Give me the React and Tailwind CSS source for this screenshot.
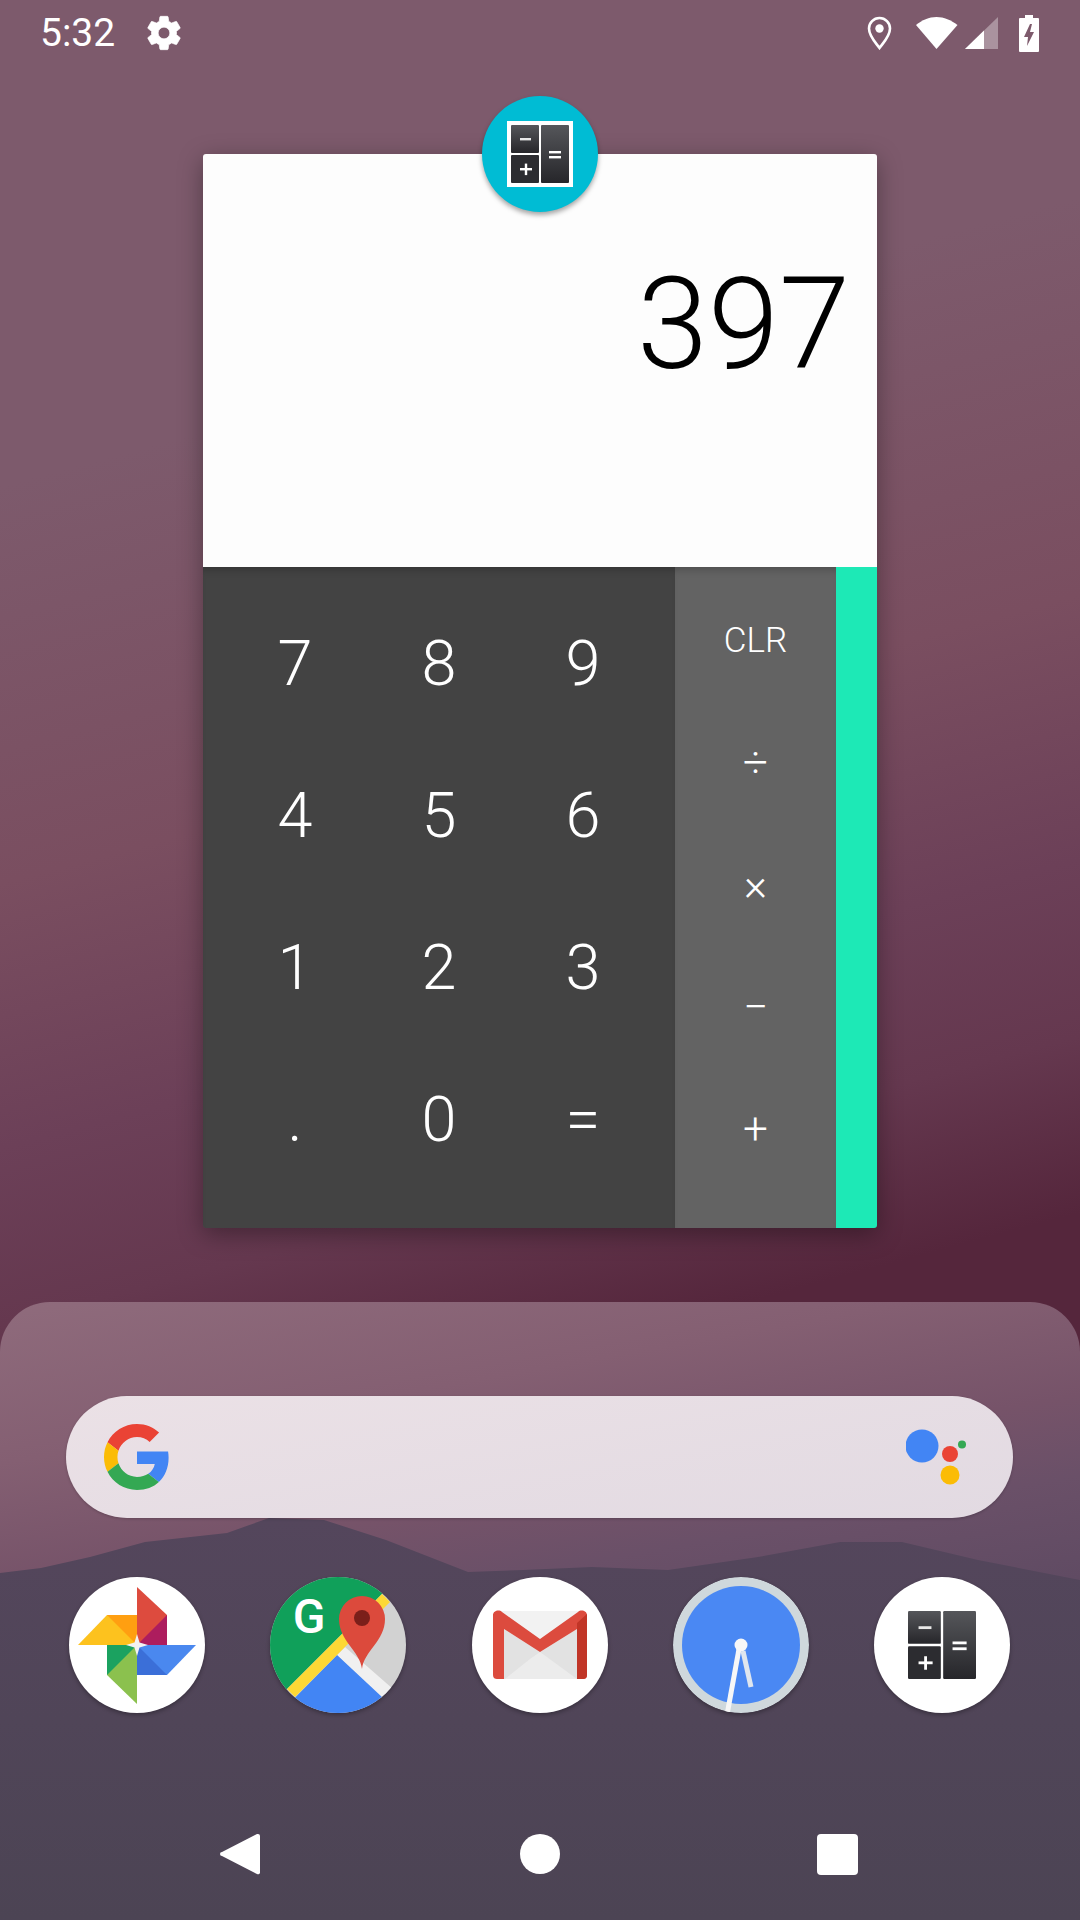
import React from 'react';

const font = { fontFamily: 'Roboto, sans-serif' };

const digits = ['7', '8', '9', '4', '5', '6', '1', '2', '3', '.', '0', '='];
const ops = ['CLR', '÷', '×', '−', '+'];

const CalcGlyph = ({ frame }) => (
  <svg viewBox={frame ? '0 0 66 66' : '4 4 58 58'} className="w-full h-full">
    <defs>
      <linearGradient id={frame ? 'keyA' : 'keyB'} x1="0" y1="0" x2="0" y2="1">
        <stop offset="0" stopColor="#55565a" />
        <stop offset="1" stopColor="#26262a" />
      </linearGradient>
    </defs>
    {frame && <rect width="66" height="66" fill="#fff" />}
    <rect x="4" y="4" width="28" height="28" rx="1" fill={`url(#${frame ? 'keyA' : 'keyB'})`} />
    <rect x="4" y="34" width="28" height="28" rx="1" fill="#2c2c30" />
    <rect x="34" y="4" width="28" height="58" rx="1" fill={`url(#${frame ? 'keyA' : 'keyB'})`} />
    <rect x="13" y="17" width="11" height="2.4" fill="#e8e8e8" />
    <rect x="13" y="47" width="12" height="2.4" fill="#fff" />
    <rect x="17.800" y="42.600" width="2.4" height="11.500" fill="#fff" />
    <rect x="42" y="30" width="12" height="2.4" fill="#fff" />
    <rect x="42" y="35" width="12" height="2.4" fill="#fff" />
  </svg>
);

const PhotosIcon = () => (
  <svg viewBox="0 0 136 136" className="w-full h-full">
    <circle cx="68" cy="68" r="68" fill="#fff" />
    <path d="M68 68V10l30 28v30z" fill="#dd4b3e" />
    <path d="M68 68l30-30v30z" fill="#ad1d5e" />
    <path d="M68 68H9l29-30h30z" fill="#fdc21e" />
    <path d="M68 68L38 38h30z" fill="#ff9f11" />
    <path d="M68 68v59L38 98V68z" fill="#8bc14e" />
    <path d="M68 68L38 98V68z" fill="#1ba260" />
    <path d="M68 68h59L98 98H68z" fill="#4a88ef" />
    <path d="M68 68l30 30H68z" fill="#3b6fd8" />
    <path d="M68 57l2.500 8.500 8.500 2.500-8.500 2.500L68 79l-2.500-8.500L57 68l8.500-2.500z" fill="#f2f2f2" />
  </svg>
);

const MapsIcon = () => (
  <svg viewBox="0 0 136 136" className="w-full h-full">
    <defs>
      <clipPath id="mapsClip"><circle cx="68" cy="68" r="68" /></clipPath>
    </defs>
    <g clipPath="url(#mapsClip)">
      <rect width="136" height="136" fill="#d2d2d2" />
      <path d="M0 0h129L0 129z" fill="#10a05a" />
      <path d="M75 70l48 42-11 12-45-46z" fill="#f0f0f0" />
      <path d="M67 78L10 136h122l-20-16z" fill="#4285f4" />
      <path d="M17 112l95-95 8 8-95 95z" fill="#fdd835" />
      <path d="M92 92c-2-18-23-28-23-50a23 23 0 0 1 46 0c0 22-21 32-23 50z" fill="#dc4a3c" />
      <circle cx="92" cy="41" r="8" fill="#7b1f1a" />
    </g>
    <text x="39" y="56" fontSize="48" fontWeight="500" fill="#fff" textAnchor="middle" style={font}>G</text>
  </svg>
);

const GmailIcon = () => (
  <svg viewBox="0 0 136 136" className="w-full h-full">
    <circle cx="68" cy="68" r="68" fill="#fff" />
    <rect x="25" y="34" width="86" height="68" fill="#f2f2f2" />
    <path d="M32 52l36 23 37-23v50H32z" fill="#e2e2e2" />
    <path d="M33 102l25-20 10-7 37 27z" fill="#ececec" />
    <path d="M21 38c0-4 6-6 9-3l38 27 38-27c3-3 9-1 9 3v60c0 3-2 4-4 4h-6V52L68 75 32 52v50h-7c-2 0-4-1-4-4z" fill="#dc4b3e" />
    <path d="M105 46l10-9v61c0 3-2 4-4 4h-6z" fill="#c13527" />
  </svg>
);

const ClockIcon = () => (
  <svg viewBox="0 0 136 136" className="w-full h-full">
    <defs>
      <clipPath id="clockClip"><circle cx="68" cy="68" r="68" /></clipPath>
    </defs>
    <g clipPath="url(#clockClip)">
      <circle cx="68" cy="68" r="68" fill="#cfd8dc" />
      <circle cx="68" cy="68" r="59" fill="#4a88f3" />
      <path d="M66 72L54 138" stroke="#f7f7f7" strokeWidth="5" />
      <path d="M70 74L78 110" stroke="#dfe6ee" strokeWidth="5" />
      <circle cx="68" cy="68" r="6.500" fill="#f7f7f7" />
    </g>
  </svg>
);

const dockIcons = [
  { id: 'photos', icon: <PhotosIcon /> },
  { id: 'maps', icon: <MapsIcon /> },
  { id: 'gmail', icon: <GmailIcon /> },
  { id: 'clock', icon: <ClockIcon /> },
  {
    id: 'calc',
    icon: (
      <div className="w-full h-full rounded-full bg-white flex items-center justify-center">
        <div className="w-[68px] h-[68px]"><CalcGlyph /></div>
      </div>
    ),
  },
];

const App = () => {
  return (
    <div
      className="relative w-[1080px] h-[1920px] overflow-hidden flex flex-col bg-[linear-gradient(165deg,#7d5a6c_0%,#7d5a6c_22%,#7a4e60_40%,#6c4058_52%,#65384f_60%,#55263c_68%,#55263c_100%)]"
      style={font}
    >
      {/* Status bar */}
      <div className="h-[66px] shrink-0 flex items-center pl-[40px] pr-[41px] text-white">
        <span className="text-[39px] leading-none font-normal">5:32</span>
        <svg viewBox="0 0 24 24" className="w-[40px] h-[40px] ml-[29px] fill-white stroke-white stroke-[0.4]">
          <path d="M19.43 12.98c.04-.32.07-.64.07-.98s-.03-.66-.07-.98l2.11-1.65c.19-.15.24-.42.12-.64l-2-3.46c-.12-.22-.39-.3-.61-.22l-2.49 1c-.52-.4-1.08-.73-1.69-.98l-.38-2.65C14.46 2.18 14.25 2 14 2h-4c-.25 0-.46.18-.49.42l-.38 2.65c-.61.25-1.17.59-1.69.98l-2.49-1c-.23-.09-.49 0-.61.22l-2 3.46c-.13.22-.07.49.12.64l2.11 1.65c-.04.32-.07.65-.07.98s.03.66.07.98l-2.11 1.65c-.19.15-.24.42-.12.64l2 3.46c.12.22.39.3.61.22l2.49-1c.52.4 1.08.73 1.69.98l.38 2.65c.03.24.24.42.49.42h4c.25 0 .46-.18.49-.42l.38-2.65c.61-.25 1.17-.59 1.69-.98l2.49 1c.23.09.49 0 .61-.22l2-3.46c.12-.22.07-.49-.12-.64l-2.11-1.65zM12 15.5c-1.93 0-3.5-1.57-3.5-3.5s1.57-3.5 3.5-3.5 3.5 1.57 3.5 3.5-1.57 3.5-3.5 3.5z" />
        </svg>
        <div className="ml-auto flex items-center">
          <svg viewBox="0 0 25 34" className="w-[25px] h-[34px]">
            <path d="M12.5 32C8 26 2 20 2 12.5a10.5 10.5 0 0 1 21 0C23 20 17 26 12.5 32z" fill="none" stroke="#fff" strokeWidth="2.6" />
            <circle cx="12.5" cy="12.5" r="4.2" fill="#fff" />
          </svg>
          <svg viewBox="0 0 42 34" className="w-[42px] h-[34px] ml-[24px]">
            <path d="M20.5 33L0 9C6 4 13 1 20.5 1S35 4 41.500 9z" fill="#fff" />
          </svg>
          <svg viewBox="0 0 33 34" className="w-[33px] h-[34px] ml-[7px]">
            <path d="M0 33L33 1v32z" fill="#fff" opacity="0.35" />
            <path d="M0 33L19 14.500V33z" fill="#fff" />
          </svg>
          <svg viewBox="0 0 20 37" className="w-[20px] h-[37px] ml-[21px]">
            <path d="M6 0h8v3h5a1 1 0 0 1 1 1v32a1 1 0 0 1-1 1H1a1 1 0 0 1-1-1V4a1 1 0 0 1 1-1h5z" fill="#fff" />
            <path d="M11 9L5 22h4l-1 9 7-14h-4l2-8z" fill="#7d5a6c" />
          </svg>
        </div>
      </div>

      {/* Recents card */}
      <div className="relative w-[674px] h-[1074px] shrink-0 ml-[203px] mt-[88px] rounded-[3px] shadow-[0_6px_24px_rgba(0,0,0,0.35)] flex flex-col">
        <div className="absolute left-[279px] top-[-58px] w-[116px] h-[116px] rounded-full bg-[#00bcd4] shadow-[0_3px_5px_rgba(0,0,0,0.35)] flex items-center justify-center z-10">
          <div className="w-[66px] h-[66px]"><CalcGlyph frame /></div>
        </div>

        <div className="h-[413px] shrink-0 bg-[#fdfdfd] rounded-t-[3px] flex justify-end pr-[27px] pt-[89px]">
          <span className="text-[128px] leading-[163px] font-light text-black">397</span>
        </div>

        <div className="flex-1 flex">
          <div className="w-[472px] bg-[#434343] rounded-bl-[3px] px-[20px] pt-[21px] shadow-[inset_0_8px_8px_-6px_rgba(0,0,0,0.25)]">
            <div className="grid grid-cols-3 auto-rows-[152px] text-white font-light text-[63px]">
              {digits.map((d) => (
                <div key={d} className="flex items-center justify-center">{d}</div>
              ))}
            </div>
          </div>
          <div className="w-[161px] bg-[#636363] pt-[13px] flex flex-col text-white font-light shadow-[inset_0_8px_8px_-6px_rgba(0,0,0,0.25)]">
            {ops.map((op) => (
              <div
                key={op}
                className={`h-[122px] flex items-center justify-center ${op === 'CLR' ? 'text-[35px]' : 'text-[44px]'}`}
              >
                {op}
              </div>
            ))}
          </div>
          <div className="w-[41px] bg-[#1de9b6] rounded-br-[3px]" />
        </div>
      </div>

      {/* Dock panel */}
      <div className="relative flex-1 mt-[74px] rounded-t-[50px] overflow-hidden bg-[linear-gradient(170deg,#8f6b7c_0%,#845f72_20%,#765369_35%,#6a5068_45%,#5e4a62_60%,#4e4556_100%)]">
        {/* mountains, coordinates relative to the panel */}
        <svg viewBox="0 0 1080 618" className="absolute left-0 top-0 w-[1080px] h-[618px]">
          <defs>
            <linearGradient id="ridge" x1="0" y1="0" x2="0" y2="1">
              <stop offset="0" stopColor="#54465c" />
              <stop offset="1" stopColor="#4c4454" />
            </linearGradient>
          </defs>
          <path
            d="M0 271L41 266 90 255 145 240 227 231 269 216 324 218 386 238 468 270 523 268 592 265 668 268 758 255 840 240 902 240 978 258 1080 278V618H0z"
            fill="url(#ridge)"
          />
        </svg>

        <div className="relative pt-[94px] pl-[66px] pr-[67px]">
          <div className="h-[122px] rounded-full bg-[linear-gradient(170deg,#ebe1e6,#e2dae2)] shadow-[0_1px_3px_rgba(0,0,0,0.2)] flex items-center justify-between pl-[38px] pr-[43px]">
            <svg viewBox="0 0 48 48" className="w-[66px] h-[66px]">
              <path fill="#ea4335" d="M24 9.500c3.540 0 6.710 1.220 9.210 3.600l6.850-6.850C35.900 2.380 30.470 0 24 0 14.620 0 6.510 5.380 2.560 13.220l7.980 6.190C12.430 13.720 17.740 9.500 24 9.500z" />
              <path fill="#4285f4" d="M46.980 24.550c0-1.570-.15-3.090-.38-4.550H24v9.020h12.940c-.58 2.960-2.260 5.480-4.780 7.180l7.730 6c4.510-4.180 7.090-10.360 7.090-17.650z" />
              <path fill="#fbbc05" d="M10.530 28.590c-.48-1.450-.76-2.990-.76-4.590s.27-3.140.76-4.590l-7.980-6.190C.92 16.460 0 20.120 0 24c0 3.880.92 7.540 2.560 10.780l7.970-6.190z" />
              <path fill="#34a853" d="M24 48c6.480 0 11.930-2.130 15.890-5.810l-7.730-6c-2.150 1.450-4.920 2.300-8.160 2.300-6.260 0-11.570-4.220-13.470-9.910l-7.980 6.190C6.510 42.620 14.620 48 24 48z" />
            </svg>
            <svg viewBox="0 0 64 64" className="w-[64px] h-[64px]">
              <circle cx="16" cy="21" r="16.500" fill="#4285f4" />
              <circle cx="44" cy="29" r="8" fill="#ea4335" />
              <circle cx="44" cy="50" r="9.500" fill="#fbbc05" />
              <circle cx="56" cy="19.500" r="4" fill="#34a853" />
            </svg>
          </div>

          <div className="flex justify-between mt-[59px] ml-[3px] mr-[3px]">
            {dockIcons.map((item) => (
              <div key={item.id} className="w-[136px] h-[136px] rounded-full shadow-[0_2px_4px_rgba(0,0,0,0.3)]">
                {item.icon}
              </div>
            ))}
          </div>
        </div>

        {/* Nav bar */}
        <div className="absolute left-0 right-0 bottom-[44px] flex items-center h-[44px]">
          <svg viewBox="0 0 40 44" className="w-[40px] h-[44px] ml-[220px]">
            <path d="M38 2a2 2 0 0 1 2 2v36a2 2 0 0 1-3 2L2 24a2 2 0 0 1 0-4L37 2z" fill="#fff" />
          </svg>
          <div className="w-[40px] h-[40px] rounded-full bg-white ml-[260px]" />
          <div className="w-[41px] h-[41px] rounded-[4px] bg-white ml-[257px]" />
        </div>
      </div>
    </div>
  );
};

export default App;
